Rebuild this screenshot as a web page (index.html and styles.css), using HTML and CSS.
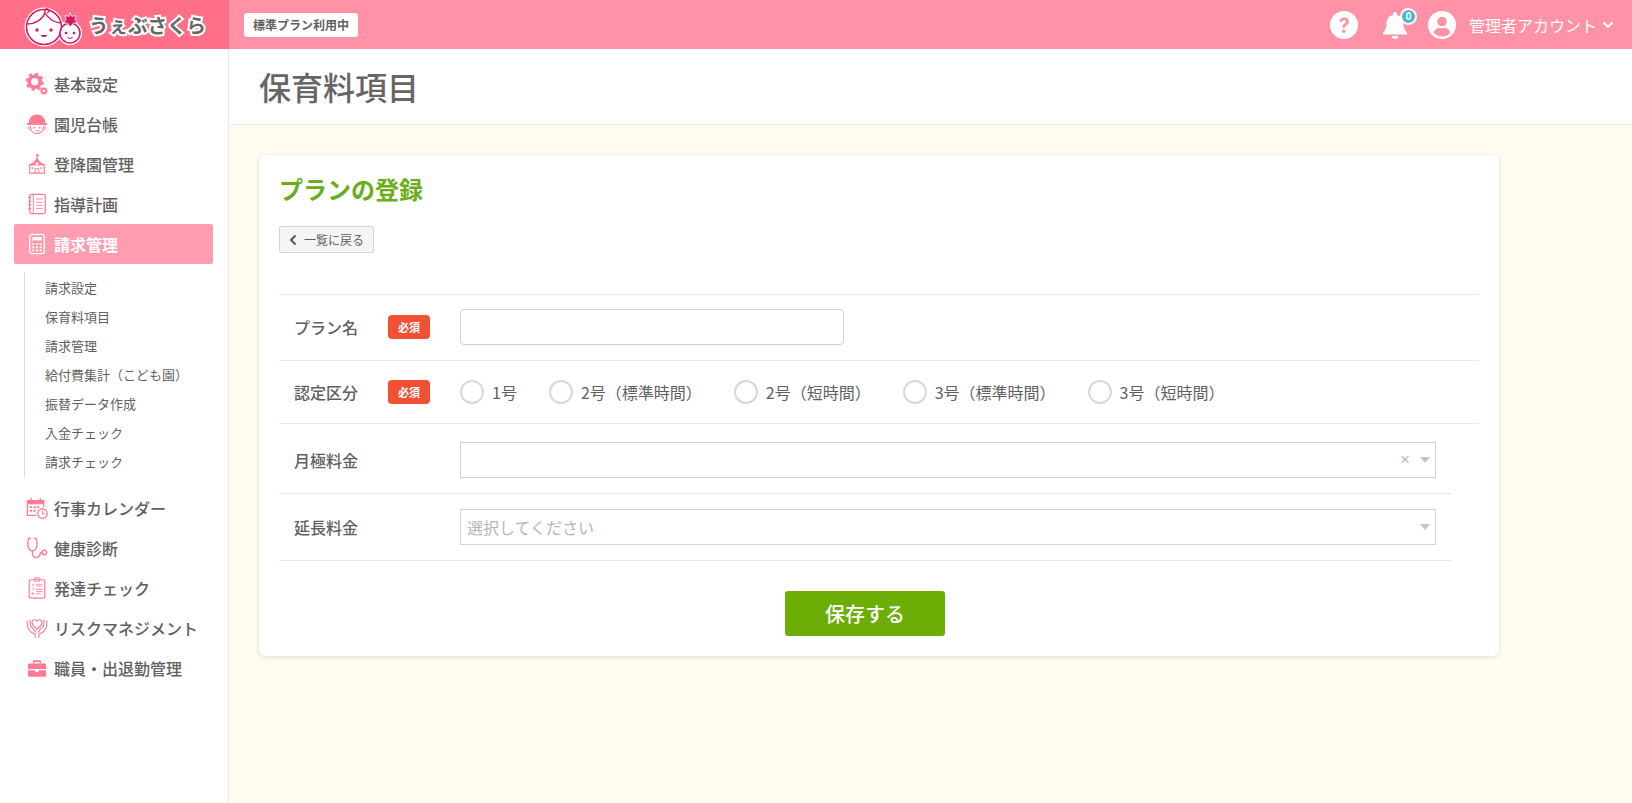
FILE: index.html
```html
<!DOCTYPE html>
<html lang="ja">
<head>
    <meta charset="UTF-8">
    <title>保育料項目</title>
    <link rel="stylesheet" href="styles.css">
</head>
<body>
    <header class="topbar">
        <div class="logo">
            <svg class="logo-mark" viewBox="0 0 60 44" width="60" height="44">
                <circle cx="20" cy="24" r="19.500" fill="#fff"/>
                <circle cx="46" cy="30" r="12" fill="#fff"/>
                <circle cx="20" cy="24" r="17.500" fill="#fff" stroke="#d6175f" stroke-width="1.500"/>
                <path d="M3.500 21C11 21 18 17 21 10c3 5 8 9 15 10" fill="none" stroke="#d6175f" stroke-width="1.400"/>
                <path d="M21 10c-1-3 1-5 3-4s1 3-1 4" fill="none" stroke="#d6175f" stroke-width="1.200"/>
                <circle cx="13" cy="27" r="1.700" fill="#d6175f"/>
                <circle cx="27" cy="27" r="1.700" fill="#d6175f"/>
                <path d="M16.500 32c2 2.800 5 2.800 7 0z" fill="#d6175f"/>
                <circle cx="46" cy="30" r="10" fill="#fff" stroke="#d6175f" stroke-width="1.500"/>
                <circle cx="42" cy="30" r="1.300" fill="#d6175f"/>
                <circle cx="50" cy="30" r="1.300" fill="#d6175f"/>
                <path d="M43.500 34c1.500 2 3.500 2 5 0" fill="none" stroke="#d6175f" stroke-width="1.200"/>
                <path d="M46 9.500l1.800 3.800 4.300-.6-1.300 4 2.800 3-4.200.5L46 24l-2.400-3.800-4.200-.5 2.800-3-1.300-4 4.300.6z" fill="#d6175f" stroke="#fff" stroke-width=".8"/>
            </svg>
            <span class="logo-text">うぇぶさくら</span>
        </div>
        <div class="topbar-main">
            <span class="plan-badge">標準プラン利用中</span>
            <div class="topbar-right">
                <svg class="top-icon" viewBox="0 0 28 28" width="28" height="28">
                    <circle cx="14" cy="14" r="14" fill="#fff"/>
                    <path d="M9.500 10.800C9.800 8 11.700 6.500 14.300 6.500c2.700 0 4.600 1.600 4.600 4 0 1.800-1 2.800-2.300 3.700-1.100.8-1.400 1.300-1.400 2.500h-2.900c-.1-2 .5-3 1.900-4 1-.7 1.600-1.200 1.600-2.100 0-.9-.7-1.500-1.700-1.500-1.100 0-1.800.7-1.900 1.900z" fill="#ff92a6"/>
                    <circle cx="13.700" cy="20.300" r="1.800" fill="#ff92a6"/>
                </svg>
                <div class="bell">
                    <svg viewBox="0 0 26 30" width="26" height="30">
                        <path d="M13 2c1.200 0 2 .8 2 2v1c4 .8 6.500 4 6.500 8.500 0 5 1.500 7 3.500 9v2H1v-2c2-2 3.500-4 3.500-9C4.500 9 7 5.800 11 5V4c0-1.200.8-2 2-2z" fill="#fff"/>
                        <path d="M9.800 26h6.400c0 1.800-1.400 3-3.200 3s-3.200-1.200-3.200-3z" fill="#fff"/>
                    </svg>
                    <span class="bell-count">0</span>
                </div>
                <svg class="top-icon" viewBox="0 0 28 28" width="28" height="28">
                    <circle cx="14" cy="14" r="14" fill="#fff"/>
                    <circle cx="14" cy="10.500" r="4.800" fill="#ff92a6"/>
                    <path d="M5.500 21.500c1.200-3.200 3.600-4.800 5.800-4.800 1 .4 1.800.6 2.700.6s1.700-.2 2.700-.6c2.200 0 4.600 1.600 5.800 4.800-2.100 2.500-5.100 3.900-8.500 3.900s-6.400-1.400-8.500-3.900z" fill="#ff92a6"/>
                </svg>
                <span class="account">管理者アカウント</span>
                <svg class="account-arrow" viewBox="0 0 12 8" width="12" height="8">
                    <path d="M1.500 1.500L6 6l4.500-4.500" fill="none" stroke="#fff" stroke-width="2.200"/>
                </svg>
            </div>
        </div>
    </header>

    <div class="layout">
        <aside class="sidebar">
            <ul class="nav">
                <li class="nav-item">
                    <svg class="nav-icon" viewBox="0 0 24 24"><circle cx="9.500" cy="9.500" r="6" fill="none" stroke="#ff7a92" stroke-width="4"/><circle cx="9.500" cy="9.500" r="8.800" fill="none" stroke="#ff7a92" stroke-width="2.400" stroke-dasharray="3.500 3.400"/><circle cx="19.500" cy="19.500" r="2.600" fill="none" stroke="#ff7a92" stroke-width="2.400"/></svg>
                    基本設定
                </li>
                <li class="nav-item">
                    <svg class="nav-icon" viewBox="0 0 24 24"><path d="M3 11C3 5 7 1.500 12 1.500S21 5 21 11z" fill="#ff7a92"/><path d="M1 12h22" stroke="#ff7a92" stroke-width="2"/><path d="M4.500 14c0 5 3 8.500 7.500 8.500s7.500-3.500 7.500-8.500" fill="none" stroke="#ff7a92" stroke-width="1.200"/><path d="M4 14.500c-2.500 0-2.500 4 .8 4M20 14.500c2.500 0 2.500 4-.8 4" fill="none" stroke="#ff7a92"/><circle cx="9" cy="16" r="1" fill="#ff7a92"/><circle cx="15" cy="16" r="1" fill="#ff7a92"/><path d="M10 19.500h4" stroke="#ff7a92"/></svg>
                    園児台帳
                </li>
                <li class="nav-item">
                    <svg class="nav-icon" viewBox="0 0 24 24"><path d="M12 1v6" stroke="#ff7a92" stroke-width="1.400"/><path d="M12 1l3 1.500-3 1.500z" fill="#ff7a92"/><path d="M8 10l4-4.500 4 4.500z" fill="#ff7a92"/><path d="M3 13l5-3h8l5 3z" fill="#ff7a92"/><path d="M4 13h16v9H4z" fill="none" stroke="#ff7a92" stroke-width="1.200"/><path d="M10 22v-5h4v5" fill="none" stroke="#ff7a92"/><circle cx="12" cy="12" r="1.500" fill="#fff"/><path d="M6 15.500h2.500v2H6zM15.500 15.500H18v2h-2.500z" fill="#ff9db0"/></svg>
                    登降園管理
                </li>
                <li class="nav-item">
                    <svg class="nav-icon" viewBox="0 0 24 24"><rect x="4" y="1.500" width="17" height="21" rx="2" fill="none" stroke="#ff7a92" stroke-width="1.400"/><path d="M8 1.500v21M11 6.500h7M11 10h7M11 13.500h7M11 17h7" stroke="#ff7a92" stroke-width="1"/><path d="M2.500 5h3M2.500 9h3M2.500 13h3M2.500 17h3" stroke="#ff7a92" stroke-width="1.200"/></svg>
                    指導計画
                </li>
                <li class="nav-item nav-item-active">
                    <svg class="nav-icon" viewBox="0 0 24 24"><rect x="4" y="1.500" width="16" height="21" rx="2.500" fill="none" stroke="#fff" stroke-width="1.500"/><rect x="7" y="4.500" width="10" height="3.500" fill="#fff"/><path d="M7 11h2v2H7zM11 11h2v2h-2zM15 11h2v2h-2zM7 14.500h2v2H7zM11 14.500h2v2h-2zM15 14.500h2v2h-2zM7 18h2v2H7zM11 18h2v2h-2zM15 18h2v2h-2z" fill="#fff"/></svg>
                    請求管理
                </li>
            </ul>
            <ul class="subnav">
                <li>請求設定</li>
                <li>保育料項目</li>
                <li>請求管理</li>
                <li>給付費集計（こども園）</li>
                <li>振替データ作成</li>
                <li>入金チェック</li>
                <li>請求チェック</li>
            </ul>
            <ul class="nav">
                <li class="nav-item">
                    <svg class="nav-icon" viewBox="0 0 24 24"><path d="M1.500 4h18v4h-18z" fill="#ff7a92"/><path d="M1.500 4h18v7M11 20H1.500V4" fill="none" stroke="#ff7a92" stroke-width="1.300"/><path d="M5.500 1v4M15.500 1v4" stroke="#ff7a92" stroke-width="1.400"/><path d="M4 10h2.500v2H4zM8 10h2.500v2H8zM12 10h2.500v2H12zM4 14h2.500v2H4zM8 14h2.500v2H8z" fill="#ff7a92"/><circle cx="18" cy="18" r="5.200" fill="#fff" stroke="#ff7a92" stroke-width="1.400"/><path d="M18 15v3.200h2.500" fill="none" stroke="#ff7a92" stroke-width="1.200"/></svg>
                    行事カレンダー
                </li>
                <li class="nav-item">
                    <svg class="nav-icon" viewBox="0 0 24 24"><path d="M5.500 1.500H3C1.800 5 1.500 8 2.300 10.500 3.200 13.200 5 15 7 15s3.800-1.800 4.700-4.500c.8-2.500.5-5.500-.7-9H8.500" fill="none" stroke="#ff7a92" stroke-width="1.500"/><path d="M7 15v2.500c0 2.800 1.800 4.800 4.300 4.800s4-1.800 4-4c0-1 .7-1.500 2-1.500" fill="none" stroke="#ff7a92" stroke-width="1.500"/><circle cx="20" cy="16.800" r="2.500" fill="none" stroke="#ff7a92" stroke-width="1.500"/></svg>
                    健康診断
                </li>
                <li class="nav-item">
                    <svg class="nav-icon" viewBox="0 0 24 24"><rect x="3.500" y="3" width="17" height="20" rx="1.500" fill="none" stroke="#ff7a92" stroke-width="1.300"/><path d="M9 1h6v3.500H9z" fill="none" stroke="#ff7a92"/><path d="M6 8.500l1 1 2-2M6 13l1 1 2-2" fill="none" stroke="#ff7a92"/><path d="M6 17h2.500v2H6z" fill="#ff7a92"/><path d="M11 7.500h7v3h-7z" fill="#ffb6c3"/><path d="M11 13.500h7M11 16h7M11 18.500h5" stroke="#ff7a92"/></svg>
                    発達チェック
                </li>
                <li class="nav-item">
                    <svg class="nav-icon" viewBox="0 0 24 24"><path d="M12 13C8 10 6.500 8 6.500 5.800 6.500 4 8 3 9.300 3c1.200 0 2.100.6 2.700 1.700C12.600 3.600 13.500 3 14.700 3 16 3 17.500 4 17.500 5.800 17.500 8 16 10 12 13z" fill="none" stroke="#ff7a92" stroke-width="1.300"/><path d="M1 4l1 8 4 5 4 2v4M4 3l1 7 4 4 2 3" fill="none" stroke="#ff7a92" stroke-width="1.200"/><path d="M23 4l-1 8-4 5-4 2v4M20 3l-1 7-4 4-2 3" fill="none" stroke="#ff7a92" stroke-width="1.200"/></svg>
                    リスクマネジメント
                </li>
                <li class="nav-item">
                    <svg class="nav-icon" viewBox="0 0 24 24"><path d="M8.500 7V4.500h7V7" fill="none" stroke="#ff7a92" stroke-width="1.800"/><path d="M3.500 7h17c.8 0 1.500.7 1.500 1.500V13H2V8.500C2 7.700 2.700 7 3.500 7zM2 14.500h8V16h4v-1.500h8V20c0 .8-.7 1.500-1.500 1.500h-17C2.700 21.500 2 20.800 2 20z" fill="#ff7a92"/></svg>
                    職員・出退勤管理
                </li>
            </ul>
        </aside>

        <main class="content">
            <div class="page-head">
                <h1>保育料項目</h1>
            </div>
            <div class="page-body">
                <section class="card">
                    <h2>プランの登録</h2>
                    <a class="back-btn" href="#">
                        <svg viewBox="0 0 8 12" width="8" height="12"><path d="M6.500 1.500L2 6l4.500 4.500" fill="none" stroke="#555" stroke-width="2"/></svg>
                        一覧に戻る
                    </a>

                    <div class="form-row row-name">
                        <span class="form-label">プラン名</span>
                        <span class="required">必須</span>
                        <input class="text-input" type="text">
                    </div>
                    <div class="form-row row-radio">
                        <span class="form-label">認定区分</span>
                        <span class="required">必須</span>
                        <div class="radios">
                            <label class="radio"><i></i>1号</label>
                            <label class="radio"><i></i>2号（標準時間）</label>
                            <label class="radio"><i></i>2号（短時間）</label>
                            <label class="radio"><i></i>3号（標準時間）</label>
                            <label class="radio"><i></i>3号（短時間）</label>
                        </div>
                    </div>
                    <div class="form-row row-short row-monthly">
                        <span class="form-label">月極料金</span>
                        <div class="select-box">
                            <span class="select-value"></span>
                            <span class="select-clear">×</span>
                            <span class="select-arrow"></span>
                        </div>
                    </div>
                    <div class="form-row row-short row-extra">
                        <span class="form-label">延長料金</span>
                        <div class="select-box">
                            <span class="select-value placeholder">選択してください</span>
                            <span class="select-arrow"></span>
                        </div>
                    </div>

                    <div class="form-actions">
                        <button class="save-btn" type="button">保存する</button>
                    </div>
                </section>
            </div>
        </main>
    </div>
</body>
</html>
```

FILE: styles.css
```css
* {
    box-sizing: border-box;
}

html, body {
    height: 100%;
}

body {
    margin: 0;
    font-family: "Noto Sans CJK JP", "Noto Sans", sans-serif;
    color: #5f5f5f;
    background-color: #fffbef;
    display: flex;
    flex-direction: column;
    overflow: hidden;
}

ul {
    list-style: none;
    margin: 0;
    padding: 0;
}

.topbar {
    display: flex;
    height: 49px;
    flex-shrink: 0;
    background-color: #ff92a6;
}

.logo {
    width: 229px;
    display: flex;
    align-items: center;
    padding-left: 24px;
    background-color: #ff6f88;
}

.logo-mark {
    flex-shrink: 0;
}

.logo-text {
    margin-left: 5px;
    font-size: 19.5px;
    font-weight: 700;
    color: #666;
    -webkit-text-stroke: 4px #fff;
    paint-order: stroke fill;
    white-space: nowrap;
}

.topbar-main {
    flex: 1;
    display: flex;
    align-items: center;
    justify-content: space-between;
    padding: 0 18px 0 15px;
}

.plan-badge {
    background-color: #fff;
    border-radius: 3px;
    height: 24px;
    line-height: 24px;
    padding: 0 9px;
    font-size: 12px;
    font-weight: 700;
    color: #5f5f5f;
}

.topbar-right {
    display: flex;
    align-items: center;
    color: #fff;
}

.bell {
    position: relative;
    width: 26px;
    height: 30px;
    margin: 0 20px 0 24px;
}

.bell svg {
    display: block;
}

.bell-count {
    position: absolute;
    top: -2px;
    right: -9px;
    width: 17px;
    height: 17px;
    border-radius: 50%;
    border: 2px solid #fff;
    background-color: #4fb2d3;
    color: #fff;
    font-size: 10px;
    font-weight: 700;
    line-height: 12px;
    text-align: center;
}

.account {
    margin-left: 13px;
    font-size: 16px;
}

.account-arrow {
    margin-left: 5px;
}

.layout {
    flex: 1;
    display: flex;
    min-height: 0;
}

.sidebar {
    width: 229px;
    flex-shrink: 0;
    background-color: #fff;
    border-right: 1px solid #e8e8e8;
    padding: 15px 15px 0 14px;
}

.nav-item {
    display: flex;
    align-items: center;
    height: 40px;
    padding-left: 12px;
    font-size: 16px;
    font-weight: 500;
    color: #5f5f5f;
    white-space: nowrap;
}

.nav-icon {
    width: 22px;
    height: 22px;
    margin-right: 6px;
    flex-shrink: 0;
}

.nav-item-active {
    background-color: #ff9db0;
    border-radius: 2px;
    color: #fff;
    font-weight: 700;
}

.subnav {
    margin: 8px 0 11px 10px;
    border-left: 1px solid #d9d9d9;
    padding: 2px 0 0 20px;
    font-size: 13px;
    color: #5f5f5f;
}

.subnav li {
    height: 29px;
    line-height: 28px;
    white-space: nowrap;
}

.content {
    flex: 1;
    min-width: 0;
    display: flex;
    flex-direction: column;
}

.page-head {
    height: 76px;
    flex-shrink: 0;
    background-color: #fff;
    border-bottom: 1px solid #ececec;
    padding-left: 30px;
    display: flex;
    align-items: center;
}

.page-head h1 {
    margin: 0 0 2px;
    font-size: 32px;
    font-weight: 500;
    color: #666;
}

.page-body {
    flex: 1;
    padding: 30px 0 0 30px;
}

.card {
    width: 1240px;
    height: 501px;
    background-color: #fff;
    border-radius: 6px;
    box-shadow: 0 1px 4px rgba(120, 100, 60, 0.2);
    padding: 17px 20px 0;
}

.card h2 {
    margin: 0 0 20px;
    height: 34px;
    line-height: 34px;
    font-size: 24px;
    font-weight: 700;
    color: #6aad1a;
}

.back-btn {
    display: inline-flex;
    align-items: center;
    height: 27px;
    width: 95px;
    padding-left: 9px;
    background-color: #f5f5f5;
    border: 1px solid #d4d4d4;
    border-radius: 2px;
    font-size: 12px;
    color: #5f5f5f;
    text-decoration: none;
}

.back-btn svg {
    margin-right: 7px;
}

.form-row {
    display: flex;
    align-items: center;
    border-bottom: 1px solid #e8e8e8;
    padding-left: 15px;
}

.row-name {
    margin-top: 41px;
    height: 67px;
    padding-bottom: 1px;
    border-top: 1px solid #e8e8e8;
}

.row-radio {
    height: 63px;
    padding-bottom: 1px;
}

.row-short {
    width: 1172px;
}

.row-monthly {
    height: 70px;
    padding-top: 2px;
}

.row-extra {
    height: 67px;
}

.form-label {
    width: 94px;
    font-size: 16px;
    font-weight: 500;
    color: #5f5f5f;
}

.required {
    width: 42px;
    height: 24px;
    line-height: 24px;
    border-radius: 4px;
    background-color: #f05033;
    color: #fff;
    text-align: center;
    font-size: 11px;
    font-weight: 700;
    margin-right: 30px;
}

.text-input {
    width: 384px;
    height: 36px;
    border: 1px solid #d0d0d0;
    border-radius: 4px;
    background-color: #fff;
}

.radios {
    display: flex;
}

.radio {
    display: flex;
    align-items: center;
    font-size: 16px;
    color: #5f5f5f;
    margin-right: 32px;
}

.radio i {
    width: 24px;
    height: 24px;
    border: 2px solid #d8d8d8;
    border-radius: 50%;
    margin-right: 8px;
}

.select-box {
    margin-left: 72px;
    width: 976px;
    height: 36px;
    border: 1px solid #d4d4d4;
    display: flex;
    align-items: center;
    padding: 0 5px 0 6px;
    font-size: 16px;
}

.select-value {
    flex: 1;
}

.placeholder {
    color: #b5b5b5;
}

.select-clear {
    font-family: "Liberation Sans", sans-serif;
    color: #bbb;
    font-size: 17px;
    margin-right: 10px;
}

.select-arrow {
    width: 0;
    height: 0;
    border-left: 5px solid transparent;
    border-right: 5px solid transparent;
    border-top: 6px solid #c4c4c4;
}

.form-actions {
    display: flex;
    justify-content: center;
    width: 1172px;
    padding-top: 30px;
}

.save-btn {
    width: 160px;
    height: 45px;
    border: 0;
    border-radius: 3px;
    background-color: #6cae06;
    color: #fff;
    font-family: inherit;
    font-size: 20px;
    font-weight: 500;
    cursor: pointer;
}
```
